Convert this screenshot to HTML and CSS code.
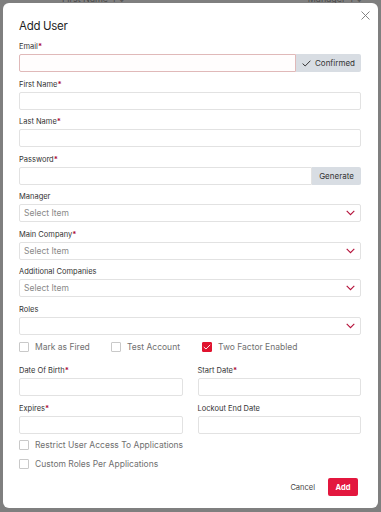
FILE: index.html
```html
<!DOCTYPE html>
<html>
<head>
<meta charset="utf-8">
<link rel="stylesheet" href="styles.css">
</head>
<body>
<div class="behind">
  <span>First Name ↑↓</span>
  <span>Manager ↑↓</span>
</div>
<div class="modal">
  <button class="close" aria-label="Close">
    <svg width="9" height="9" viewBox="0 0 9 9"><path d="M0.5 0.5 L8.5 8.5 M8.5 0.5 L0.5 8.5" stroke="#777" stroke-width="0.9" fill="none"/></svg>
  </button>
  <h1 class="title">Add User</h1>

  <div class="field">
    <label class="lbl">Email<span class="req">*</span></label>
    <div class="group">
      <div class="input input-error"></div>
      <div class="addon addon-confirm">
        <svg width="9" height="7" viewBox="0 0 9 7"><path d="M0.6 3.6 L3.2 6 L8.4 0.7" stroke="#333" stroke-width="1" fill="none"/></svg>
        <span>Confirmed</span>
      </div>
    </div>
  </div>

  <div class="field">
    <label class="lbl">First Name<span class="req">*</span></label>
    <div class="input"></div>
  </div>

  <div class="field">
    <label class="lbl">Last Name<span class="req">*</span></label>
    <div class="input"></div>
  </div>

  <div class="field">
    <label class="lbl">Password<span class="req">*</span></label>
    <div class="group">
      <div class="input"></div>
      <div class="addon addon-gen">Generate</div>
    </div>
  </div>

  <div class="field">
    <label class="lbl">Manager</label>
    <div class="input select"><span class="ph">Select Item</span><svg class="chev" width="9" height="6" viewBox="0 0 9 6"><path d="M0.7 0.8 L4.5 4.6 L8.3 0.8" stroke="#b5123a" stroke-width="1.1" fill="none"/></svg></div>
  </div>

  <div class="field">
    <label class="lbl">Main Company<span class="req">*</span></label>
    <div class="input select"><span class="ph">Select Item</span><svg class="chev" width="9" height="6" viewBox="0 0 9 6"><path d="M0.7 0.8 L4.5 4.6 L8.3 0.8" stroke="#b5123a" stroke-width="1.1" fill="none"/></svg></div>
  </div>

  <div class="field">
    <label class="lbl">Additional Companies</label>
    <div class="input select"><span class="ph">Select Item</span><svg class="chev" width="9" height="6" viewBox="0 0 9 6"><path d="M0.7 0.8 L4.5 4.6 L8.3 0.8" stroke="#b5123a" stroke-width="1.1" fill="none"/></svg></div>
  </div>

  <div class="field field-roles">
    <label class="lbl">Roles</label>
    <div class="input select"><span class="ph"></span><svg class="chev" width="9" height="6" viewBox="0 0 9 6"><path d="M0.7 0.8 L4.5 4.6 L8.3 0.8" stroke="#b5123a" stroke-width="1.1" fill="none"/></svg></div>
  </div>

  <div class="checks">
    <div class="check"><span class="box"></span><span>Mark as Fired</span></div>
    <div class="check"><span class="box"></span><span>Test Account</span></div>
    <div class="check"><span class="box box-on"><svg width="8" height="6" viewBox="0 0 8 6"><path d="M0.8 3 L3 5 L7.2 0.8" stroke="#fff" stroke-width="0.9" fill="none"/></svg></span><span>Two Factor Enabled</span></div>
  </div>

  <div class="row2">
    <div class="field">
      <label class="lbl">Date Of Birth<span class="req">*</span></label>
      <div class="input"></div>
    </div>
    <div class="field">
      <label class="lbl">Start Date<span class="req">*</span></label>
      <div class="input"></div>
    </div>
  </div>

  <div class="row2 row2-last">
    <div class="field">
      <label class="lbl">Expires<span class="req">*</span></label>
      <div class="input"></div>
    </div>
    <div class="field">
      <label class="lbl">Lockout End Date</label>
      <div class="input"></div>
    </div>
  </div>

  <div class="check check-line"><span class="box"></span><span>Restrict User Access To Applications</span></div>
  <div class="check check-line"><span class="box"></span><span>Custom Roles Per Applications</span></div>

  <div class="footer">
    <button class="btn-cancel">Cancel</button>
    <button class="btn-add">Add</button>
  </div>
</div>
</body>
</html>
```
FILE: styles.css
```css
* { box-sizing: border-box; }
html, body { margin: 0; padding: 0; }
body {
  width: 381px;
  height: 512px;
  background: #7f7f7f;
  font-family: Inter, "Noto Sans", sans-serif;
  color: #2b2b2b;
  overflow: hidden;
  position: relative;
}
.behind {
  position: absolute;
  top: -6px;
  left: 0;
  right: 0;
  display: flex;
  justify-content: space-between;
  padding: 0 18px 0 62px;
  font-size: 9px;
  line-height: 10px;
  color: #4a4a4a;
}
.modal {
  position: absolute;
  left: 3px;
  top: 3px;
  width: 375px;
  height: 505px;
  background: #fff;
  border-radius: 6px;
  padding: 15px 17px 0 16px;
  display: flex;
  flex-direction: column;
}
.close {
  position: absolute;
  right: 8px;
  top: 8px;
  border: 0;
  background: none;
  padding: 0;
  width: 9px;
  height: 9px;
  display: flex;
}
.title {
  margin: 0 0 7px;
  font-size: 11.5px;
  letter-spacing: -0.3px;
  line-height: 16px;
  font-weight: 400;
  color: #1f1f1f;
}
.field {
  display: flex;
  flex-direction: column;
  margin-bottom: 6.5px;
}
.field-roles { margin-bottom: 5.5px; }
.lbl {
  font-size: 7.5px;
  line-height: 11px;
  height: 11px;
  margin-bottom: 2px;
  color: #333;
}
.req { color: #b0123a; font-weight: 700; }
.input {
  height: 18px;
  border: 1px solid #e2e2e2;
  border-radius: 2px;
  background: #fff;
  flex: none;
}
.group { display: flex; height: 18px; }
.group .input { flex: 1; border-radius: 2px 0 0 2px; }
.input-error { border-color: #e0b9b9; background: #fffdfd; }
.addon {
  display: flex;
  align-items: center;
  justify-content: center;
  gap: 4px;
  background: #d8dde3;
  border-radius: 0 2px 2px 0;
  font-size: 8px;
  color: #333;
}
.addon-confirm { width: 65px; }
.addon-gen { width: 49px; }
.select {
  display: flex;
  align-items: center;
  justify-content: space-between;
  padding: 0 5px 0 4px;
}
.ph { font-size: 8.5px; color: #8a8a8a; }
.chev { display: block; }
.checks {
  display: flex;
  margin: 0 0 12px;
}
.check {
  display: flex;
  align-items: center;
  gap: 6px;
  font-size: 8.5px;
  color: #707070;
  height: 13px;
}
.checks .check:nth-child(1) { width: 92px; }
.checks .check:nth-child(2) { width: 91px; }
.box {
  width: 10px;
  height: 10px;
  border: 1px solid #c9c9c9;
  border-radius: 1px;
  background: #fff;
  display: flex;
  align-items: center;
  justify-content: center;
}
.box-on { background: #e0142f; border-color: #e0142f; }
.row2 {
  display: grid;
  grid-template-columns: 1fr 1fr;
  column-gap: 15px;
}
.row2-last .field { margin-bottom: 4.5px; }
.check-line { margin-bottom: 6px; }
.footer {
  display: flex;
  justify-content: flex-end;
  align-items: center;
  gap: 13px;
  margin-top: 2px;
  padding-right: 3px;
}
.btn-cancel {
  border: 0;
  background: none;
  font-family: inherit;
  font-size: 7.5px;
  color: #444;
  padding: 0;
}
.btn-add {
  border: 0;
  background: #e3173e;
  color: #fff;
  font-family: inherit;
  font-size: 7.5px;
  font-weight: 700;
  width: 30px;
  height: 18px;
  border-radius: 2px;
  padding: 0;
}
```
